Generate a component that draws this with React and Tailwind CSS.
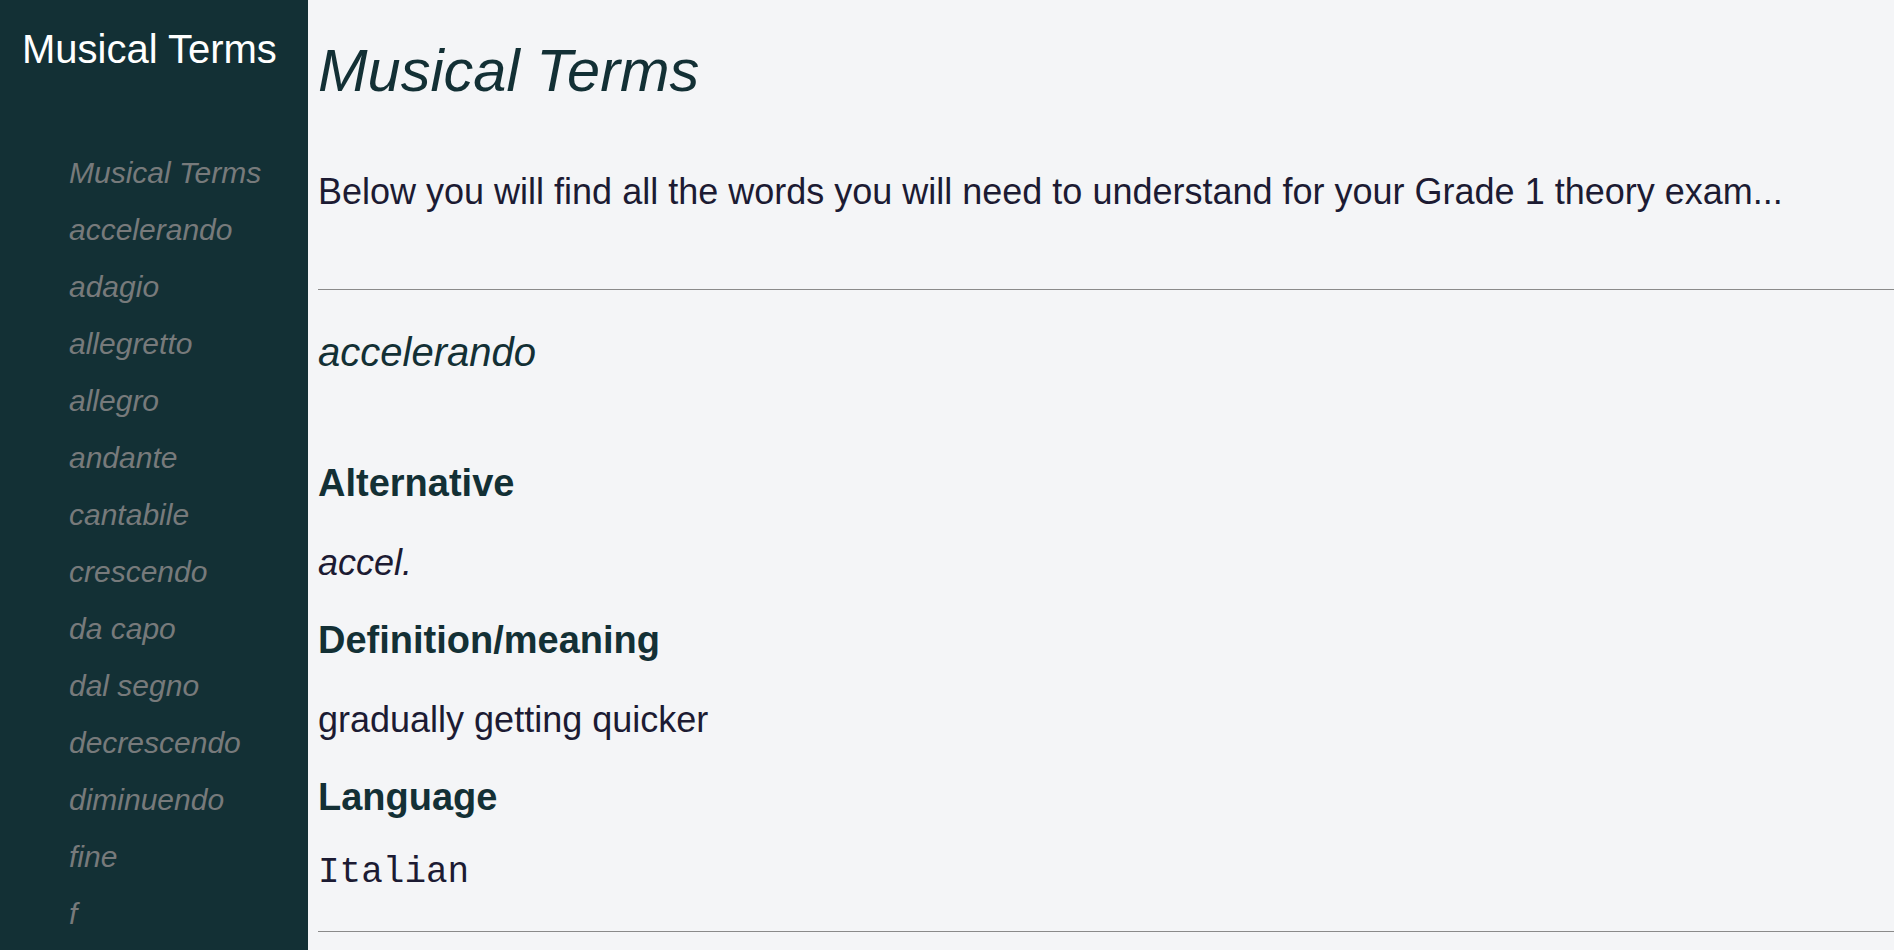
import React from "react";

const TERMS = [
  "Musical Terms",
  "accelerando",
  "adagio",
  "allegretto",
  "allegro",
  "andante",
  "cantabile",
  "crescendo",
  "da capo",
  "dal segno",
  "decrescendo",
  "diminuendo",
  "fine",
  "f",
];

function Sidebar() {
  return (
    <aside className="w-[308px] shrink-0 h-full bg-[#133035] overflow-hidden">
      <div className="pl-[22px] pt-[27px] text-[40px] leading-[45px] text-white">
        Musical Terms
      </div>
      <ul className="mt-[72px] pl-[69px]">
        {TERMS.map((term) => (
          <li key={term} className="text-[30px] leading-[57px] italic text-[#777a7b]">
            {term}
          </li>
        ))}
      </ul>
    </aside>
  );
}

function App() {
  return (
    <div
      className="flex h-screen w-full overflow-hidden"
      style={{ fontFamily: '"Liberation Sans", Arial, sans-serif' }}
    >
      <Sidebar />
      <main className="flex-1 h-full overflow-hidden bg-[#f4f5f7] pl-[10px]">
        <h1 className="pt-[37px] text-[59.5px] leading-[67px] italic text-[#133035]">
          Musical Terms
        </h1>
        <p className="mt-[67px] text-[36px] leading-[41px] text-[#1c1b33] whitespace-nowrap">
          Below you will find all the words you will need to understand for your Grade 1 theory exam...
        </p>
        <hr className="mt-[77px] border-0 border-t border-[#8a8a8a]" />

        {/* term entry */}
        <section>
          <h2 className="mt-[39px] text-[40px] leading-[46px] italic text-[#133035]">
            accelerando
          </h2>
          <h3 className="mt-[87px] text-[38px] leading-[43px] font-bold text-[#133035]">
            Alternative
          </h3>
          <p className="mt-[37px] text-[36px] leading-[41px] italic text-[#1c1b33]">accel.</p>
          <h3 className="mt-[36px] text-[38px] leading-[43px] font-bold text-[#133035]">
            Definition/meaning
          </h3>
          <p className="mt-[37px] text-[36px] leading-[41px] text-[#1c1b33]">
            gradually getting quicker
          </p>
          <h3 className="mt-[36px] text-[38px] leading-[43px] font-bold text-[#133035]">
            Language
          </h3>
          <p
            className="mt-[33px] text-[36px] leading-[41px] text-[#1c1b33]"
            style={{ fontFamily: '"Liberation Mono", "Courier New", monospace' }}
          >
            Italian
          </p>
        </section>
        <hr className="mt-[38px] border-0 border-t border-[#8a8a8a]" />
      </main>
    </div>
  );
}

export default App;
